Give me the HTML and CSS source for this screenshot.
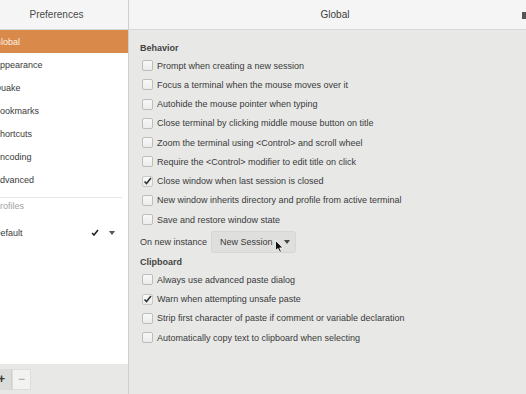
FILE: index.html
```html
<!DOCTYPE html>
<html>
<head>
<meta charset="utf-8">
<link rel="stylesheet" href="styles.css">
</head>
<body>
<div class="window">
  <aside class="sidebar">
    <div class="sb-header">Preferences</div>
    <div class="sb-list">
      <div class="sb-item selected">Global</div>
      <div class="sb-item">Appearance</div>
      <div class="sb-item">Quake</div>
      <div class="sb-item">Bookmarks</div>
      <div class="sb-item">Shortcuts</div>
      <div class="sb-item">Encoding</div>
      <div class="sb-item">Advanced</div>
      <div class="sb-sep"></div>
      <div class="sb-label">Profiles</div>
      <div class="sb-profile">
        <span class="sb-name">Default</span>
        <svg class="sb-check" width="8" height="7" viewBox="0 0 8 7"><path d="M1 4 L3 6 L7 1" fill="none" stroke="#222" stroke-width="1.6"/></svg>
        <svg class="sb-arrow" width="6" height="4" viewBox="0 0 6 4"><path d="M0 0 H6 L3 4 Z" fill="#555"/></svg>
      </div>
    </div>
    <div class="sb-toolbar">
      <div class="tb-btn tb-add">+</div>
      <div class="tb-btn tb-remove">−</div>
    </div>
  </aside>
  <main class="main">
    <div class="main-header">
      <span></span>
      <span class="main-title">Global</span>
      <span class="hdr-ctrl"><span class="hdr-icon"></span></span>
    </div>
    <div class="content">
      <div class="section-title">Behavior</div>
      <div class="row"><span class="cb"></span>Prompt when creating a new session</div>
      <div class="row"><span class="cb"></span>Focus a terminal when the mouse moves over it</div>
      <div class="row"><span class="cb"></span>Autohide the mouse pointer when typing</div>
      <div class="row"><span class="cb"></span>Close terminal by clicking middle mouse button on title</div>
      <div class="row"><span class="cb"></span>Zoom the terminal using &lt;Control&gt; and scroll wheel</div>
      <div class="row"><span class="cb"></span>Require the &lt;Control&gt; modifier to edit title on click</div>
      <div class="row"><span class="cb checked"><svg width="9" height="8" viewBox="0 0 9 8"><path d="M1.5 4.5 L3.5 6.5 L8 1" fill="none" stroke="#2e3436" stroke-width="1.6"/></svg></span>Close window when last session is closed</div>
      <div class="row"><span class="cb"></span>New window inherits directory and profile from active terminal</div>
      <div class="row"><span class="cb"></span>Save and restore window state</div>
      <div class="instance-row">
        <span class="instance-label">On new instance</span>
        <span class="combo">New Session<svg class="combo-arrow" width="6" height="4" viewBox="0 0 6 4"><path d="M0 0 H6 L3 4 Z" fill="#444"/></svg>
          <svg class="cursor" width="9" height="13" viewBox="0 0 9 13"><path d="M0.5 0.5 L0.5 10.5 L3 8.5 L4.8 12.3 L6.4 11.6 L4.7 7.9 L8 7.9 Z" fill="#111" stroke="#fff" stroke-width="0.8"/></svg>
        </span>
      </div>
      <div class="section-title">Clipboard</div>
      <div class="row"><span class="cb"></span>Always use advanced paste dialog</div>
      <div class="row"><span class="cb checked"><svg width="9" height="8" viewBox="0 0 9 8"><path d="M1.5 4.5 L3.5 6.5 L8 1" fill="none" stroke="#2e3436" stroke-width="1.6"/></svg></span>Warn when attempting unsafe paste</div>
      <div class="row"><span class="cb"></span>Strip first character of paste if comment or variable declaration</div>
      <div class="row"><span class="cb"></span>Automatically copy text to clipboard when selecting</div>
    </div>
  </main>
</div>
</body>
</html>
```
FILE: styles.css
```css
html, body {
  margin: 0;
  padding: 0;
  width: 526px;
  height: 394px;
  overflow: hidden;
  background: #e8e8e7;
  font-family: "Liberation Sans", Arial, sans-serif;
  font-size: 9px;
  color: #3a3a3a;
}

.window {
  display: flex;
  width: 556px;
  height: 394px;
  margin-left: -15px;
}

/* Sidebar */
.sidebar {
  width: 143px;
  flex: none;
  display: flex;
  flex-direction: column;
  border-right: 1px solid #cfcfcd;
}

.sb-header {
  height: 29px;
  flex: none;
  display: flex;
  align-items: center;
  justify-content: center;
  background: #f5f5f5;
  border-bottom: 1px solid #d8d8d6;
  font-size: 10px;
  color: #4a4a4a;
}

.sb-list {
  flex: 1;
  background: #ffffff;
  display: flex;
  flex-direction: column;
}

.sb-item {
  height: 23px;
  display: flex;
  align-items: center;
  padding-left: 9px;
  color: #3a3a3a;
}

.sb-item.selected {
  background: #d98a4b;
  color: #fbefe4;
}

.sb-sep {
  height: 1px;
  background: #e6e6e6;
  margin: 6px 6px 0 0;
}

.sb-label {
  height: 16px;
  display: flex;
  align-items: center;
  padding-left: 9px;
  color: #a3a3a3;
}

.sb-profile {
  height: 23px;
  margin-top: 7px;
  display: flex;
  align-items: center;
  padding: 0 13px 0 9px;
}

.sb-name {
  flex: 1;
}

.sb-check {
  margin-right: 10px;
}

.sb-toolbar {
  height: 30px;
  flex: none;
  display: flex;
  align-items: center;
  padding-left: 7px;
  background: #e8e8e7;
}

.tb-btn {
  width: 19px;
  height: 21px;
  display: flex;
  align-items: center;
  justify-content: center;
  box-sizing: border-box;
  font-size: 12px;
}

.tb-add {
  background: #dcdcdb;
  color: #333;
  border-right: 1px solid #cfcfce;
  width: 20px;
  font-weight: bold;
}

.tb-remove {
  background: #f2f2f1;
  color: #9a9a9a;
  border: 1px solid #dedede;
}

/* Main */
.main {
  flex: 1;
  display: flex;
  flex-direction: column;
}

.main-header {
  height: 29px;
  flex: none;
  display: grid;
  grid-template-columns: 1fr auto 1fr;
  align-items: center;
  background: #f5f5f5;
  border-bottom: 1px solid #d8d8d6;
  font-size: 10px;
  color: #3c3c3c;
}

.hdr-ctrl {
  display: flex;
  justify-content: flex-end;
  padding-right: 11px;
}

.hdr-icon {
  width: 8px;
  height: 7px;
  background: #555;
  margin-top: 1px;
}

.content {
  padding: 10px 0 0 11px;
  display: flex;
  flex-direction: column;
}

.section-title {
  height: 16px;
  display: flex;
  align-items: center;
  font-weight: bold;
  color: #444;
}

.row {
  height: 19.25px;
  display: flex;
  align-items: center;
  white-space: nowrap;
}

.cb {
  width: 11px;
  height: 11px;
  box-sizing: border-box;
  border: 1px solid #bdbdbb;
  border-radius: 2px;
  background: linear-gradient(#f8f8f8, #ececec);
  margin: 0 4px 0 2px;
  display: flex;
  align-items: center;
  justify-content: center;
  flex: none;
}

.cb.checked {
  border-color: #c8c8c6;
}

.instance-row {
  display: flex;
  align-items: center;
  margin: 2px 0 1px;
  height: 22px;
}

.instance-label {
  margin-right: 4px;
}

.combo {
  position: relative;
  width: 85px;
  height: 22px;
  box-sizing: border-box;
  border: 1px solid #d6d6d5;
  border-radius: 3px;
  background: #dfdfde;
  display: flex;
  align-items: center;
  padding-left: 8px;
  color: #3a3a3a;
}

.combo-arrow {
  margin-left: 11px;
}

.cursor {
  position: absolute;
  left: 63px;
  top: 8px;
}
```
